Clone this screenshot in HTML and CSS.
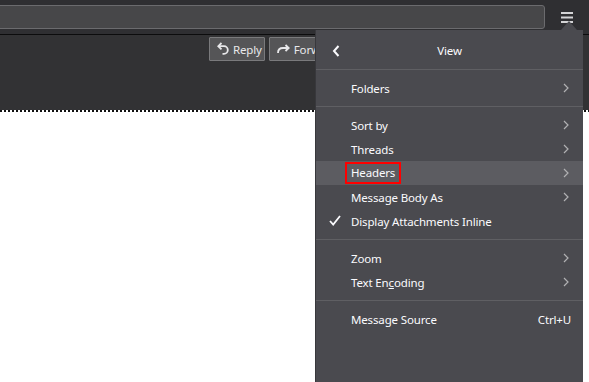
FILE: index.html
```html
<!DOCTYPE html>
<html lang="en">
<head>
    <meta charset="UTF-8">
    <meta name="viewport" content="width=device-width, initial-scale=1.0">
    <title>View Menu</title>
    <link rel="stylesheet" href="styles.css">
</head>
<body>
    <div class="topbar">
        <div class="search-box"></div>
        <button class="menu-button" aria-label="Menu">
            <svg width="12" height="12" viewBox="0 0 12 12">
                <rect x="0" y="1" width="12" height="2" fill="#d4d4d6"/>
                <rect x="0" y="5.5" width="12" height="2" fill="#d4d4d6"/>
                <rect x="0" y="10" width="12" height="2" fill="#d4d4d6"/>
            </svg>
        </button>
    </div>

    <div class="toolbar">
        <button class="tool-button">
            <svg width="12" height="14" viewBox="0 0 12 14" fill="none" stroke="#e8e8ea" stroke-width="1.8">
                <path d="M4.5 1 L1.3 4.2 L4.5 7.4"/>
                <path d="M1.5 4.2 H7 a3.8 3.8 0 0 1 0 7.6 H5.5"/>
            </svg>
            Reply
        </button>
        <button class="tool-button wide">
            <svg width="13" height="12" viewBox="0 0 13 12" fill="none" stroke="#e8e8ea" stroke-width="1.8">
                <path d="M1 10 C1 6.5 3 5 6 5 H11.5"/>
                <path d="M8.5 2 L11.7 5 L8.5 8"/>
            </svg>
            Forward
        </button>
        <button class="tool-button blank"></button>
    </div>

    <div class="message-body"></div>

    <!-- View panel of the app menu -->
    <div class="panel">
        <div class="panel-arrow"></div>
        <div class="panel-header">
            <svg class="back" width="8" height="12" viewBox="0 0 8 12" fill="none" stroke="#fbfbfe" stroke-width="2">
                <path d="M6.5 1 L2 6 L6.5 11"/>
            </svg>
            <span class="panel-title">View</span>
        </div>
        <div class="section">
            <div class="item">Folders<svg class="chev" width="6" height="10" viewBox="0 0 6 10"><path d="M1 1 L5 5 L1 9"/></svg></div>
        </div>
        <div class="section">
            <div class="item">Sort by<svg class="chev" width="6" height="10" viewBox="0 0 6 10"><path d="M1 1 L5 5 L1 9"/></svg></div>
            <div class="item">Threads<svg class="chev" width="6" height="10" viewBox="0 0 6 10"><path d="M1 1 L5 5 L1 9"/></svg></div>
            <div class="item active"><span class="marked">Headers</span><svg class="chev" width="6" height="10" viewBox="0 0 6 10"><path d="M1 1 L5 5 L1 9"/></svg></div>
            <div class="item">Message Body As<svg class="chev" width="6" height="10" viewBox="0 0 6 10"><path d="M1 1 L5 5 L1 9"/></svg></div>
            <div class="item">
                <svg class="check" width="12" height="11" viewBox="0 0 12 11" fill="none" stroke="#fbfbfe" stroke-width="1.8">
                    <path d="M1 6 L4.2 9.5 L11 1"/>
                </svg>
                Display Attachments Inline
            </div>
        </div>
        <div class="section">
            <div class="item">Zoom<svg class="chev" width="6" height="10" viewBox="0 0 6 10"><path d="M1 1 L5 5 L1 9"/></svg></div>
            <div class="item">Text En<u>c</u>oding<svg class="chev" width="6" height="10" viewBox="0 0 6 10"><path d="M1 1 L5 5 L1 9"/></svg></div>
        </div>
        <div class="section">
            <div class="item">Message Source<span class="shortcut">Ctrl+U</span></div>
        </div>
    </div>
</body>
</html>
```

FILE: styles.css
```css
body {
    margin: 0;
    width: 589px;
    height: 382px;
    overflow: hidden;
    background-color: #ffffff;
    font-family: "Noto Sans", "Open Sans", sans-serif;
    font-size: 11.5px;
    letter-spacing: -0.15px;
    color: #fbfbfe;
    position: relative;
}
.topbar {
    height: 34px;
    background-color: #2f2f32;
    display: flex;
    align-items: center;
    border-bottom: 1px solid #0c0c0d;
}
.search-box {
    flex: 1;
    height: 22px;
    margin-left: -4px;
    background-color: #474749;
    border: 1px solid #6b6b6e;
    border-radius: 3px;
}
.menu-button {
    width: 44px;
    height: 34px;
    padding: 0;
    border: none;
    background: none;
    display: flex;
    align-items: center;
    justify-content: center;
}
.toolbar {
    height: 73px;
    background-color: #323234;
    display: flex;
    align-items: flex-start;
    gap: 4px;
    padding: 2px 0 0 209px;
    overflow: hidden;
}
.tool-button {
    flex-shrink: 0;
    height: 24px;
    display: flex;
    align-items: center;
    gap: 4px;
    padding: 0 2px 0 7px;
    background-color: #555557;
    border: 1px solid #7a7a7c;
    border-radius: 1px;
    color: #e8e8ea;
    font-family: "Noto Sans", "Open Sans", sans-serif;
    font-size: 11.5px;
    letter-spacing: -0.15px;
}
.tool-button.wide {
    width: 72px;
}
.tool-button.blank {
    width: 60px;
}
.message-body {
    height: 2px;
    background: repeating-linear-gradient(90deg, #111111 0 2px, #ffffff 2px 4px);
}
.panel {
    position: absolute;
    top: 30px;
    left: 315px;
    width: 268px;
    bottom: 0;
    background-color: #4a4a4f;
    border-left: 1px solid #38383c;
    box-sizing: border-box;
}
.panel-arrow {
    position: absolute;
    top: -9px;
    left: 245px;
    width: 0;
    height: 0;
    border-left: 8px solid transparent;
    border-right: 8px solid transparent;
    border-bottom: 9px solid #4a4a4f;
}
.panel-header {
    height: 39px;
    display: flex;
    align-items: center;
    justify-content: center;
    position: relative;
    border-bottom: 1px solid #5f5f63;
}
.back {
    position: absolute;
    left: 16px;
    top: 15px;
}
.panel-title {
    margin-top: 2px;
}
.section {
    padding: 6px 0;
    border-bottom: 1px solid #5f5f63;
}
.section:last-child {
    border-bottom: none;
}
.item {
    height: 24px;
    display: flex;
    align-items: center;
    padding: 0 12px 0 35px;
    position: relative;
}
.item.active {
    background-color: #5c5c61;
}
.chev {
    margin-left: auto;
    margin-right: 2px;
    fill: none;
    stroke: #b1b1b3;
    stroke-width: 1.2;
}
.shortcut {
    margin-left: auto;
}
.check {
    position: absolute;
    left: 13px;
    top: 6px;
}
.marked {
    border: 2px solid #ff0000;
    padding: 0 4px;
    margin-left: -6px;
    line-height: 18px;
}
```
